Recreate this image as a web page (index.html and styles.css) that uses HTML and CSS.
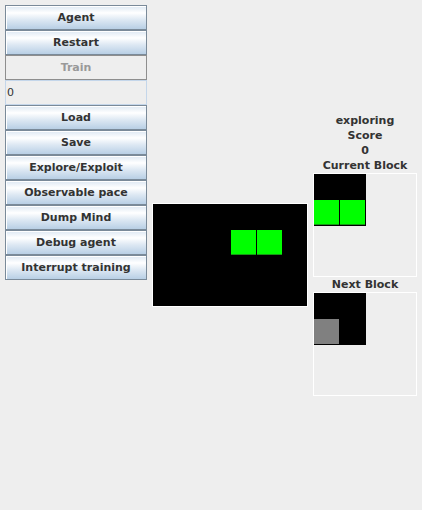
FILE: index.html
```html
<!DOCTYPE html>
<html>
<head>
<meta charset="utf-8">
<link rel="stylesheet" href="styles.css">
</head>
<body>
<div class="app">
  <div class="controls">
    <button class="btn">Agent</button>
    <button class="btn">Restart</button>
    <button class="btn" disabled>Train</button>
    <input class="field" type="text" value="0" readonly>
    <button class="btn">Load</button>
    <button class="btn">Save</button>
    <button class="btn">Explore/Exploit</button>
    <button class="btn">Observable pace</button>
    <button class="btn">Dump Mind</button>
    <button class="btn">Debug agent</button>
    <button class="btn">Interrupt training</button>
  </div>
  <div class="board">
    <div class="cell green c4 r2"></div>
    <div class="cell green c5 r2"></div>
  </div>
  <div class="side">
    <div class="label">exploring</div>
    <div class="label">Score</div>
    <div class="label">0</div>
    <div class="label">Current Block</div>
    <div class="preview-box">
      <div class="preview">
        <div class="cell green c1 r2"></div>
        <div class="cell green c2 r2"></div>
      </div>
    </div>
    <div class="label">Next Block</div>
    <div class="preview-box">
      <div class="preview">
        <div class="cell gray c1 r2"></div>
      </div>
    </div>
  </div>
</div>
</body>
</html>
```

FILE: styles.css
```css
html, body {
  margin: 0;
  padding: 0;
  background: #eeeeee;
}

.app {
  display: flex;
  gap: 5px;
  padding: 5px;
  height: 510px;
  box-sizing: border-box;
  font-family: "DejaVu Sans", "Liberation Sans", sans-serif;
}

.controls {
  display: flex;
  flex-direction: column;
  width: 142px;
  align-self: flex-start;
}

.btn {
  height: 25px;
  margin: 0;
  padding: 0;
  box-sizing: border-box;
  border: 1px solid #7a8a99;
  box-shadow: inset 1px 1px 0 #ffffff;
  background: linear-gradient(to bottom, #dde8f3 0%, #ffffff 30%, #dde8f3 60%, #b8cfe5 100%);
  font-family: "DejaVu Sans", "Liberation Sans", sans-serif;
  font-weight: bold;
  font-size: 11px;
  color: #333333;
  text-align: center;
  line-height: 23px;
}

.btn:disabled {
  border-color: #8e8e8e;
  box-shadow: none;
  background: #eeeeee;
  color: #999999;
}

.field {
  height: 25px;
  margin: 0;
  padding: 0 0 0 1px;
  box-sizing: border-box;
  border: 1px solid #c4d6ea;
  background: #eeeeee;
  font-family: "DejaVu Sans", "Liberation Sans", sans-serif;
  font-size: 11px;
  color: #333333;
  outline: none;
}

.board {
  align-self: center;
  width: 156px;
  height: 104px;
  box-sizing: border-box;
  border: 1px solid #ffffff;
  background: #000000;
  display: grid;
  grid-template-columns: repeat(6, 26px);
  grid-template-rows: repeat(4, 26px);
  overflow: hidden;
}

.side {
  align-self: center;
  width: 104px;
  margin-bottom: 1px;
  display: flex;
  flex-direction: column;
}

.label {
  height: 15px;
  line-height: 15px;
  font-weight: bold;
  font-size: 11px;
  color: #333333;
  text-align: center;
  white-space: nowrap;
}

.preview-box {
  width: 104px;
  height: 104px;
  box-sizing: border-box;
  border: 1px solid #ffffff;
}

.preview {
  width: 52px;
  height: 52px;
  background: #000000;
  display: grid;
  grid-template-columns: repeat(2, 26px);
  grid-template-rows: repeat(2, 26px);
}

.cell {
  width: 25px;
  height: 25px;
  box-sizing: border-box;
}

.green {
  background: #00ff00;
  border-bottom: 1px solid #159a15;
}

.gray {
  background: #808080;
}

.c1 { grid-column: 1; }
.c2 { grid-column: 2; }
.c4 { grid-column: 4; }
.c5 { grid-column: 5; }
.r2 { grid-row: 2; }
```
